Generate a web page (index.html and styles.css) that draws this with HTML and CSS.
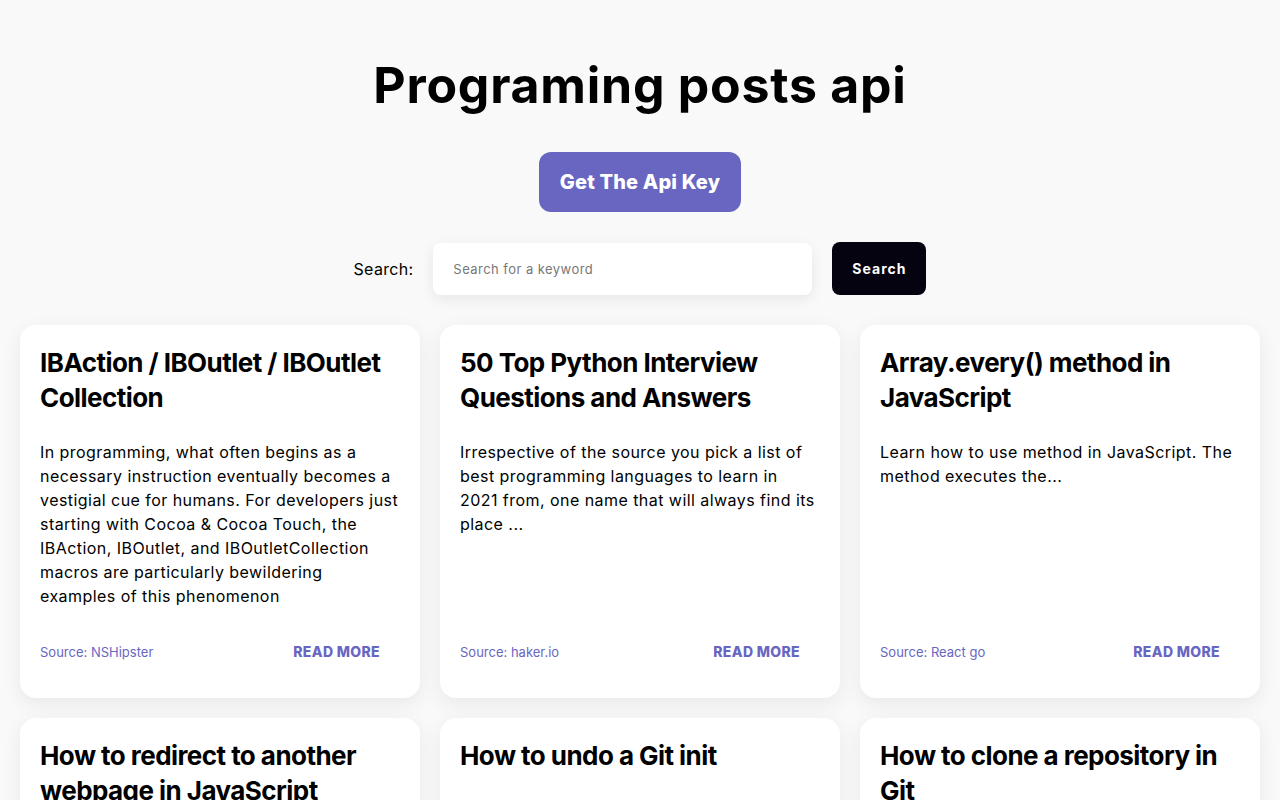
FILE: index.html
```html
<!DOCTYPE html>
<html lang="en">
<head>
<meta charset="utf-8">
<title>Programing posts api</title>
<link rel="stylesheet" href="styles.css">
</head>
<body>
<header class="header">
  <h1 class="title">Programing posts api</h1>
  <a class="api-btn" href="#">Get The Api Key</a>
  <form class="search-row">
    <label class="search-label" for="q">Search:</label>
    <input class="search-input" id="q" type="text" placeholder="Search for a keyword">
    <button class="search-btn" type="button">Search</button>
  </form>
</header>
<main class="grid">
  <article class="card">
    <h2 class="card-title">IBAction / IBOutlet / IBOutlet Collection</h2>
    <p class="card-text">In programming, what often begins as a necessary instruction eventually becomes a vestigial cue for humans. For developers just starting with Cocoa &amp; Cocoa Touch, the IBAction, IBOutlet, and IBOutletCollection macros are particularly bewildering examples of this phenomenon</p>
    <div class="card-foot"><span class="source">Source: NSHipster</span><a class="read" href="#">READ MORE</a></div>
  </article>
  <article class="card">
    <h2 class="card-title">50 Top Python Interview Questions and Answers</h2>
    <p class="card-text">Irrespective of the source you pick a list of best programming languages to learn in 2021 from, one name that will always find its place ...</p>
    <div class="card-foot"><span class="source">Source: haker.io</span><a class="read" href="#">READ MORE</a></div>
  </article>
  <article class="card">
    <h2 class="card-title">Array.every() method in JavaScript</h2>
    <p class="card-text">Learn how to use method in JavaScript. The method executes the...</p>
    <div class="card-foot"><span class="source">Source: React go</span><a class="read" href="#">READ MORE</a></div>
  </article>
  <article class="card">
    <h2 class="card-title">How to redirect to another webpage in JavaScript</h2>
    <p class="card-text">Learn how to redirect the user to another webpage using plain JavaScript.</p>
    <div class="card-foot"><span class="source">Source: React go</span><a class="read" href="#">READ MORE</a></div>
  </article>
  <article class="card">
    <h2 class="card-title">How to undo a Git init</h2>
    <p class="card-text">Learn how to undo a git init command by removing the .git folder.</p>
    <div class="card-foot"><span class="source">Source: React go</span><a class="read" href="#">READ MORE</a></div>
  </article>
  <article class="card">
    <h2 class="card-title">How to clone a repository in Git</h2>
    <p class="card-text">Learn how to clone a remote repository to your local machine.</p>
    <div class="card-foot"><span class="source">Source: React go</span><a class="read" href="#">READ MORE</a></div>
  </article>
</main>
</body>
</html>
```

FILE: styles.css
```css
* { box-sizing: border-box; }

body {
  margin: 0;
  background: #f9f9f9;
  font-family: "Inter", "Open Sans", sans-serif;
  color: #000;
}

.header {
  display: flex;
  flex-direction: column;
  align-items: center;
  padding-top: 49px;
}

.title {
  margin: 0;
  font-size: 50px;
  line-height: 72px;
  font-weight: 700;
  letter-spacing: 0.75px;
}

.api-btn {
  margin-top: 31px;
  display: flex;
  align-items: center;
  justify-content: center;
  width: 202px;
  height: 60px;
  border-radius: 12px;
  background: #6966c2;
  color: #fff;
  font-size: 20px;
  font-weight: 800;
  text-decoration: none;
  letter-spacing: 0.17px;
}

.search-row {
  margin: 30px 0 0;
  display: flex;
  align-items: center;
  gap: 20px;
}

.search-label {
  font-size: 16px;
  letter-spacing: 0.3px;
}

.search-input {
  width: 379px;
  height: 52px;
  border: none;
  outline: none;
  border-radius: 8px;
  background: #fff;
  padding: 0 20px;
  font-family: inherit;
  font-size: 13px;
  letter-spacing: 0.45px;
  color: #333;
  box-shadow: 0 4px 14px rgba(0, 0, 0, 0.08);
}

.search-input::placeholder { color: #777; }

.search-btn {
  height: 53px;
  padding: 0 20px;
  border: none;
  border-radius: 8px;
  background: #05030f;
  color: #fff;
  font-family: inherit;
  font-size: 14px;
  font-weight: 700;
  letter-spacing: 1px;
}

.grid {
  display: grid;
  grid-template-columns: repeat(3, 1fr);
  gap: 20px;
  padding: 30px 20px 20px;
}

.card {
  display: flex;
  flex-direction: column;
  background: #fff;
  border-radius: 16px;
  padding: 20px 20px 28px;
  box-shadow: 0 6px 20px rgba(0, 0, 0, 0.07);
}

.card-title {
  margin: 0;
  font-size: 26px;
  line-height: 35px;
  font-weight: 700;
  letter-spacing: -0.55px;
}

.card-text {
  margin: 25px 1px 0 0;
  font-size: 16px;
  line-height: 24px;
  letter-spacing: 0.45px;
}

.card-foot {
  margin-top: auto;
  padding-top: 25px;
  display: flex;
  align-items: center;
  justify-content: space-between;
}

.source {
  font-size: 13px;
  color: #6966c2;
}

.read {
  padding: 10px 20px;
  font-size: 14px;
  font-weight: 800;
  letter-spacing: 0.35px;
  color: #6966c2;
  text-decoration: none;
}
```
